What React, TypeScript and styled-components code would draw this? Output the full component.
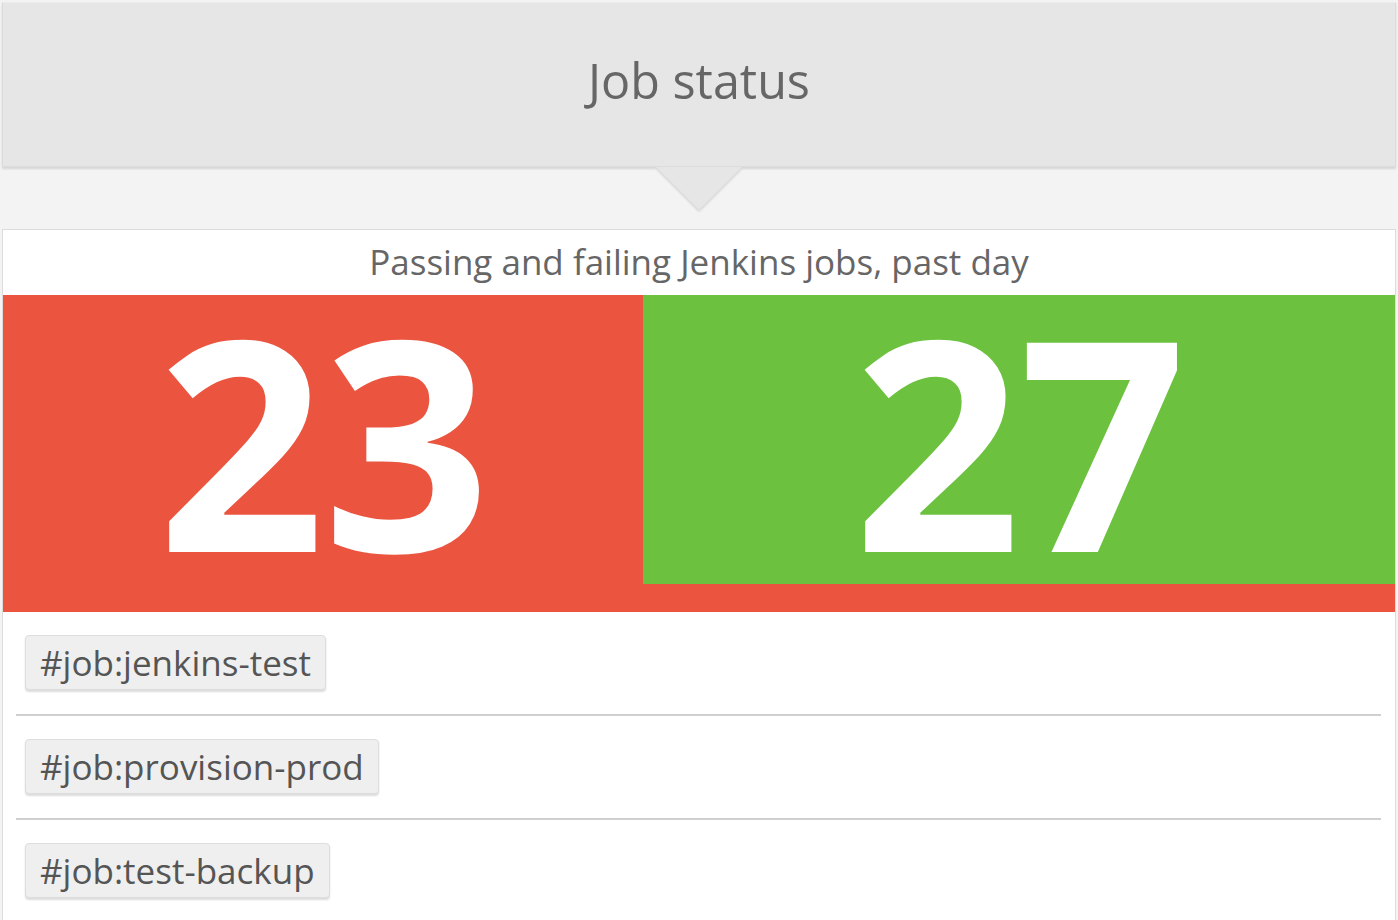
import React from "react";
import styled, { createGlobalStyle } from "styled-components";

const Global = createGlobalStyle`
  html, body { margin: 0; padding: 0; }
  body {
    background: #f3f3f3;
    font-family: "Open Sans", "Liberation Sans", sans-serif;
    width: 1398px;
    height: 920px;
    overflow: hidden;
  }
`;

const Page = styled.div`
  padding: 2px 2px 0 2px;
  display: flex;
  flex-direction: column;
`;

const Header = styled.header`
  position: relative;
  height: 163px;
  background: #e6e6e6;
  border: 1px solid #dcdcdc;
  border-top-color: #ececec;
  box-shadow: 0 2px 2px rgba(0, 0, 0, 0.12);
  display: flex;
  align-items: center;
  justify-content: center;
`;

const Title = styled.h1`
  margin: 0;
  font-weight: 400;
  font-size: 48.5px;
  line-height: 1.2;
  color: #666;
  transform: translateY(-4px);
`;

const Pointer = styled.div`
  position: absolute;
  left: 50%;
  bottom: -44px;
  margin-left: -43px;
  width: 0;
  height: 0;
  border-left: 43px solid transparent;
  border-right: 43px solid transparent;
  border-top: 43px solid #e6e6e6;
  filter: drop-shadow(0 2px 1px rgba(0, 0, 0, 0.12));
`;

const Card = styled.section`
  margin-top: 62px;
  background: #fff;
  border: 1px solid #dcdcdc;
  border-bottom: none;
  display: flex;
  flex-direction: column;
`;

const Subtitle = styled.div`
  height: 65px;
  display: flex;
  align-items: center;
  justify-content: center;
  font-size: 35px;
  line-height: 1.2;
  color: #666;
  & > span {
    transform: translateY(-1px);
  }
`;

const Counts = styled.div`
  display: flex;
  align-items: flex-start;
  background: #eb5540;
  padding-bottom: 28px;
`;

const CountCell = styled.div<{ $bg: string; $w?: string }>`
  ${(p) => (p.$w ? `width: ${p.$w};` : "flex: 1;")}
  height: 289px;
  background: ${(p) => p.$bg};
  display: flex;
  align-items: center;
  justify-content: center;
  color: #fff;
  font-weight: 700;
  font-size: 293px;
  line-height: 0.8;
  letter-spacing: -2px;
`;

const Num = styled.span`
  display: block;
`;

const List = styled.ul`
  list-style: none;
  margin: 0 14px 0 13px;
  padding: 0;
`;

const Row = styled.li`
  padding: 23px 9px 24px;
  border-bottom: 2px solid #d0d0d0;
  &:last-child {
    border-bottom: none;
  }
`;

const Tag = styled.span`
  display: inline-flex;
  align-items: center;
  height: 53px;
  padding: 0 14px;
  background: #efefef;
  border: 1px solid #dedede;
  border-radius: 4px;
  box-shadow: 0 2px 2px rgba(0, 0, 0, 0.14);
  font-size: 35px;
  line-height: 1;
  color: #555;
`;

const jobs = ["#job:jenkins-test", "#job:provision-prod", "#job:test-backup"];

export default function App() {
  return (
    <>
      <Global />
      <Page>
        <Header>
          <Title>Job status</Title>
          <Pointer />
        </Header>
        <Card>
          <Subtitle>
            <span>Passing and failing Jenkins jobs, past day</span>
          </Subtitle>
          <Counts>
            <CountCell $bg="#eb5540" $w="640px">
              <Num>23</Num>
            </CountCell>
            <CountCell $bg="#6cc23f">
              <Num>27</Num>
            </CountCell>
          </Counts>
          <List>
            {jobs.map((j) => (
              <Row key={j}>
                <Tag>{j}</Tag>
              </Row>
            ))}
          </List>
        </Card>
      </Page>
    </>
  );
}
